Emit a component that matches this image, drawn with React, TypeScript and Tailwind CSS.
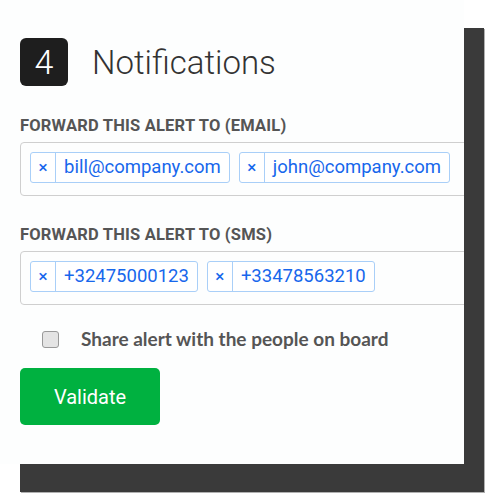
import React from 'react';

const roboto = { fontFamily: 'Roboto, "Liberation Sans", sans-serif' };

function Chip({ value }: { value: string }) {
  return (
    <div className="flex items-stretch h-[31px] border border-[#a9cff8] rounded-[3px] text-[#1767ec] bg-white">
      <span className="w-[25px] flex items-center justify-center border-r border-[#a9cff8] text-[17px] font-medium">×</span>
      <span className="px-[8px] flex items-center text-[18.5px] leading-none">{value}</span>
    </div>
  );
}

function TagField({ label, items }: { label: string; items: string[] }) {
  return (
    <div>
      <p className="text-[16.5px] leading-[16px] font-bold uppercase tracking-[0.2px] text-[#555]">{label}</p>
      <div className="mt-[8px] w-[470px] h-[54px] border border-[#cfcfcf] rounded-[4px] px-[9px] pt-[9px] flex gap-[9px]">
        {items.map((it) => (
          <Chip key={it} value={it} />
        ))}
      </div>
    </div>
  );
}

export default function App() {
  return (
    <div className="w-[500px] h-[500px] bg-white" style={roboto}>
      <div className="w-[464px] h-[464px] overflow-hidden bg-[#fdfefe] shadow-[20px_28px_0_0_#3a3a3a,21px_29px_0_0_#b0b0b0] pt-[38px] pl-[20px]">
        {/* header */}
        <div className="flex items-center gap-[24px] h-[48px]">
          <div className="w-[48px] h-[48px] rounded-[6px] bg-[#1e1e1e] text-white flex items-center justify-center text-[34px] font-light leading-none">4</div>
          <h1 className="text-[33px] font-light text-[#333] leading-none">Notifications</h1>
        </div>

        <div className="mt-[32px]">
          <TagField label="Forward this alert to (email)" items={['bill@company.com', 'john@company.com']} />
        </div>
        <div className="mt-[31px]">
          <TagField label="Forward this alert to (SMS)" items={['+32475000123', '+33478563210']} />
        </div>

        <label className="mt-[25px] flex items-center h-[18px] pl-[22px] gap-[22px]">
          <span className="w-[17px] h-[17px] rounded-[3px] border border-[#999] bg-[#e4e4e4]" />
          <span className="text-[19px] font-bold text-[#555]" style={{ fontFamily: 'Lato, sans-serif' }}>
            Share alert with the people on board
          </span>
        </label>

        <button className="mt-[20px] w-[140px] h-[57px] rounded-[5px] bg-[#00b140] text-white text-[20px]">Validate</button>
      </div>
    </div>
  );
}
